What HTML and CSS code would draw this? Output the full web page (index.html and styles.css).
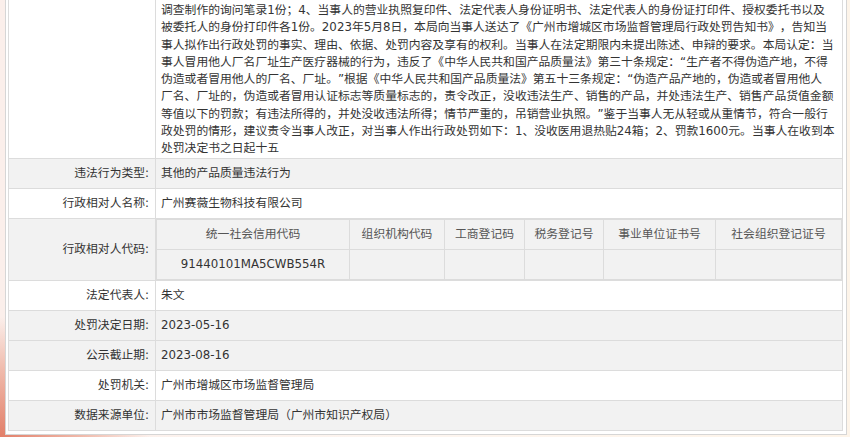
FILE: index.html
```html
<!DOCTYPE html>
<html lang="zh-CN">
<head>
    <meta charset="UTF-8">
    <meta name="viewport" content="width=device-width, initial-scale=1.0">
    <title>行政处罚信息</title>
    <link rel="stylesheet" href="styles.css">
</head>
<body>
    <div class="detail">
        <table class="info">
            <colgroup>
                <col class="col-label">
                <col>
            </colgroup>
            <tr>
                <td class="label"></td>
                <td class="value long">
                    调查制作的询问笔录1份；4、当事人的营业执照复印件、法定代表人身份证明书、法定代表人的身份证打印件、授权委托书以及<br>
                    被委托人的身份打印件各1份。2023年5月8日，本局向当事人送达了《广州市增城区市场监督管理局行政处罚告知书》，告知当<br>
                    事人拟作出行政处罚的事实、理由、依据、处罚内容及享有的权利。当事人在法定期限内未提出陈述、申辩的要求。本局认定：当<br>
                    事人冒用他人厂名厂址生产医疗器械的行为，违反了《中华人民共和国产品质量法》第三十条规定：“生产者不得伪造产地，不得<br>
                    伪造或者冒用他人的厂名、厂址。”根据《中华人民共和国产品质量法》第五十三条规定：“伪造产品产地的，伪造或者冒用他人<br>
                    厂名、厂址的，伪造或者冒用认证标志等质量标志的，责令改正，没收违法生产、销售的产品，并处违法生产、销售产品货值金额<br>
                    等值以下的罚款；有违法所得的，并处没收违法所得；情节严重的，吊销营业执照。”鉴于当事人无从轻或从重情节，符合一般行<br>
                    政处罚的情形，建议责令当事人改正，对当事人作出行政处罚如下：1、没收医用退热贴24箱；2、罚款1600元。当事人在收到本<br>
                    处罚决定书之日起十五
                </td>
            </tr>
            <tr class="alt">
                <td class="label">违法行为类型:</td>
                <td class="value">其他的产品质量违法行为</td>
            </tr>
            <tr>
                <td class="label">行政相对人名称:</td>
                <td class="value">广州赛薇生物科技有限公司</td>
            </tr>
            <tr class="alt">
                <td class="label">行政相对人代码:</td>
                <td class="value codes-cell">
                    <table class="codes">
                        <colgroup>
                            <col class="c1">
                            <col class="c2">
                            <col class="c3">
                            <col class="c4">
                            <col class="c5">
                            <col>
                        </colgroup>
                        <tr>
                            <th>统一社会信用代码</th>
                            <th>组织机构代码</th>
                            <th>工商登记码</th>
                            <th>税务登记号</th>
                            <th>事业单位证书号</th>
                            <th>社会组织登记证号</th>
                        </tr>
                        <tr>
                            <td>91440101MA5CWB554R</td>
                            <td></td>
                            <td></td>
                            <td></td>
                            <td></td>
                            <td></td>
                        </tr>
                    </table>
                </td>
            </tr>
            <tr>
                <td class="label">法定代表人:</td>
                <td class="value">朱文</td>
            </tr>
            <tr class="alt">
                <td class="label">处罚决定日期:</td>
                <td class="value">2023-05-16</td>
            </tr>
            <tr class="alt">
                <td class="label">公示截止期:</td>
                <td class="value">2023-08-16</td>
            </tr>
            <tr>
                <td class="label">处罚机关:</td>
                <td class="value">广州市增城区市场监督管理局</td>
            </tr>
            <tr class="alt">
                <td class="label">数据来源单位:</td>
                <td class="value">广州市市场监督管理局（广州市知识产权局）</td>
            </tr>
        </table>
    </div>
</body>
</html>
```

FILE: styles.css
```css
html {
    height: 100%;
}
body {
    margin: 0;
    min-height: 100%;
    font-family: "DejaVu Sans", "Noto Sans CJK SC", sans-serif;
    font-size: 11.8px;
    color: #333;
    text-spacing-trim: space-all;
    background:
        radial-gradient(ellipse 150px 120px at 0 100%, #e27f69 0%, rgba(232, 150, 128, 0.6) 55%, rgba(250, 225, 215, 0) 100%),
        linear-gradient(to right, #fbefeb 0%, #fdf5ef 50%, #fdf4e9 100%);
}
.detail {
    width: 835px;
    margin: -12px 0 0 5px;
    padding: 2px 3px 3px 2px;
    background-color: #fff;
    border: 1px solid #d6d6d6;
}
table {
    border-collapse: collapse;
    table-layout: fixed;
}
.info {
    width: 835px;
    border: 1px solid #d9d9d9;
}
.col-label {
    width: 147px;
}
.info td {
    border: 1px solid #dcdcdc;
    padding: 5px 6px;
    line-height: 19px;
    vertical-align: middle;
}
.info td.label {
    text-align: right;
}
.info td.long {
    padding: 10px 6px 0 5px;
    line-height: 17.3px;
}
.info td.value {
    padding-left: 5px;
}
.alt {
    background-color: #f2f2f2;
}
.info td.codes-cell {
    padding: 0;
}
.codes {
    width: 100%;
    border: 1px solid #dcdcdc;
}
.codes .c1 { width: 193px; }
.codes .c2 { width: 95px; }
.codes .c3 { width: 80px; }
.codes .c4 { width: 79px; }
.codes .c5 { width: 112px; }
.codes th,
.codes td {
    border: 1px solid #dcdcdc;
    padding: 5px 4px;
    line-height: 19px;
    font-weight: normal;
    text-align: center;
}
.codes th {
    color: #555;
}
```
